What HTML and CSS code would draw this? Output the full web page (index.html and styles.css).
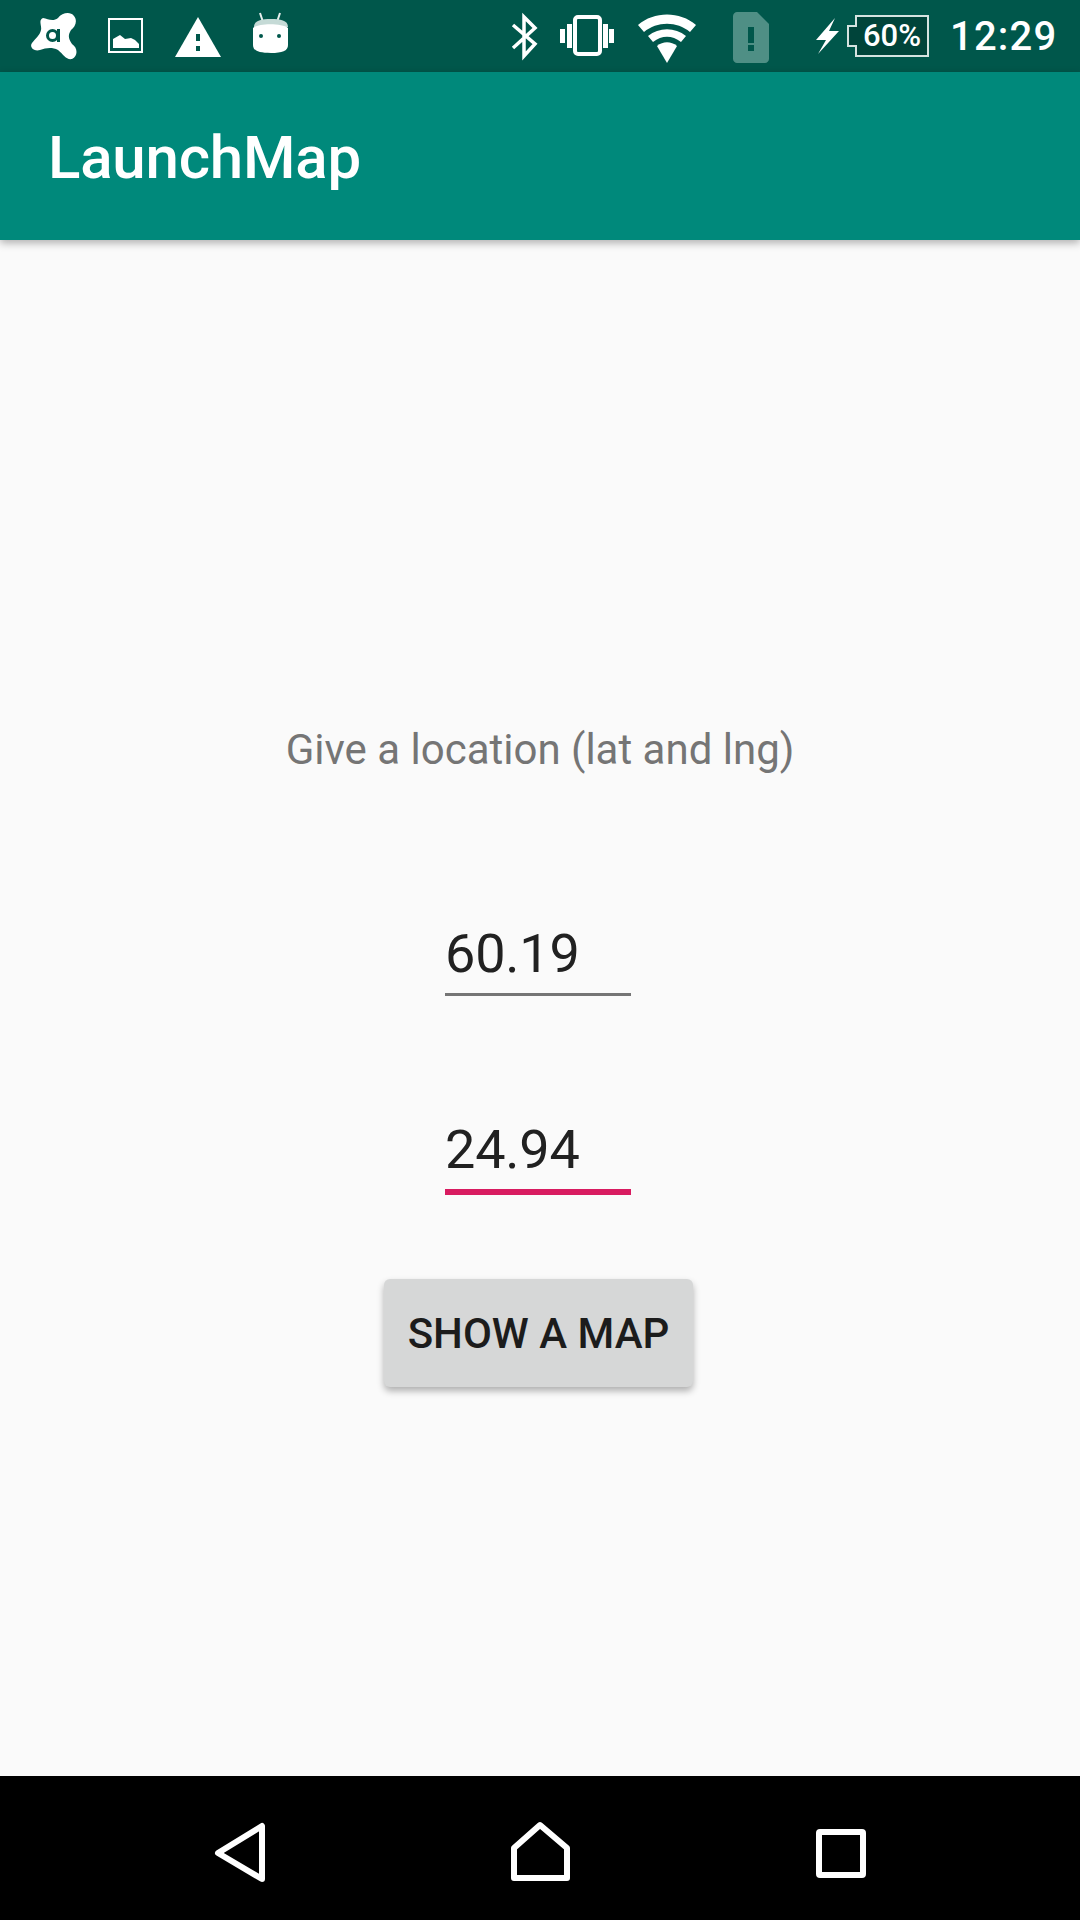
FILE: index.html
```html
<!DOCTYPE html>
<html>
<head>
  <title>LaunchMap</title>
  <link rel="stylesheet" href="styles.css">
</head>
<body>
  <div class="status-bar">
    <svg class="icon avast" viewBox="30 0 48 72">
      <path fill="#fff" d="M43 18C48 19 53 22 58 18C62 13 70 11 74 16C78 21 75 27 71 30C68 35 68 38 72 44C78 48 78 56 72 59C66 60 64 55 58 50C52 47 46 48 40 50C34 52 29 47 32 43C36 38 40 35 41 30C42 26 38 20 43 18Z"/>
      <circle cx="52.5" cy="35.5" r="5" fill="#fff" stroke="#00574b" stroke-width="3"/>
      <rect x="57" y="29" width="3" height="13" fill="#00574b"/>
    </svg>
    <svg class="icon picture" viewBox="108 0 36 72">
      <rect x="109" y="19" width="33" height="33" fill="none" stroke="#fff" stroke-width="2"/>
      <path fill="#fff" d="M113 48V39L120 35L125 39L131 38L135 40L139 44V48Z"/>
    </svg>
    <svg class="icon warning" viewBox="175 0 46 72">
      <path fill="#fff" d="M198 17L221 57H175Z"/>
      <rect x="196" y="34" width="4" height="7" fill="#00574b"/>
      <rect x="196" y="46" width="4" height="5" fill="#00574b"/>
    </svg>
    <svg class="icon droid" viewBox="253 0 36 72">
      <path stroke="#e6efed" stroke-width="2" d="M260 13L263 22M280 13L277 22"/>
      <path fill="#c5dad6" d="M254 27C254 20 262 19 271 19C280 19 288 20 288 27Z"/>
      <path fill="#fff" d="M253 28C258 23 282 23 288 28V45C288 51 282 53 271 53C259 53 253 51 253 45Z"/>
      <circle cx="261" cy="36" r="2" fill="#00574b"/>
      <circle cx="279" cy="36" r="2" fill="#00574b"/>
    </svg>
    <svg class="icon bluetooth" viewBox="511 0 27 72">
      <path fill="none" stroke="#fff" stroke-width="3.5" d="M513 25L535 44L524 56V17L535 28L513 48"/>
    </svg>
    <svg class="icon vibrate" viewBox="560 0 54 72">
      <rect x="575" y="17" width="25" height="37" rx="3" fill="none" stroke="#fff" stroke-width="4"/>
      <path fill="#fff" d="M560 29H565V43H560ZM567 24H572V48H567ZM603 24H608V48H603ZM609 29H614V43H609Z"/>
    </svg>
    <svg class="icon wifi" viewBox="638 0 58 72">
      <path fill="#fff" d="M638 25C654 11 680 11 696 25L690 32C677 21 657 21 644 32Z"/>
      <path fill="#fff" d="M648 36C659 27 675 27 686 36L681 42C672 35 662 35 653 42Z"/>
      <path fill="#fff" d="M657 46C663 41 671 41 677 46L667 63Z"/>
    </svg>
    <svg class="icon sim" viewBox="733 0 36 72">
      <path fill="#4f8f85" d="M737 12H757L769 24V59C769 61 767 63 765 63H737C735 63 733 61 733 59V16C733 14 735 12 737 12Z"/>
      <rect x="748" y="27" width="6" height="16" fill="#00574b"/>
      <rect x="748" y="45" width="6" height="6" fill="#00574b"/>
    </svg>
    <svg class="icon bolt" viewBox="816 0 24 72">
      <path fill="#fff" d="M835 18L816 40H826L818 54L839 31H829Z"/>
    </svg>
    <div class="battery">
      <span class="battery-nub"></span>
      <span class="battery-body">60%</span>
    </div>
    <span class="clock">12:29</span>
  </div>

  <div class="app-bar">LaunchMap</div>

  <div class="content">
    <p class="hint">Give a location (lat and lng)</p>
    <input class="field" type="text" value="60.19">
    <input class="field field-focus" type="text" value="24.94">
    <button class="map-btn">SHOW A MAP</button>
  </div>

  <div class="nav-bar">
    <svg class="nav-icon back" viewBox="212 1820 56 66">
      <path fill="none" stroke="#fff" stroke-width="6" stroke-linejoin="round" d="M218 1853L262 1826V1879Z"/>
    </svg>
    <svg class="nav-icon home" viewBox="508 1818 66 66">
      <path fill="none" stroke="#fff" stroke-width="6" stroke-linejoin="round" d="M540 1825L567 1848V1878H514V1848Z"/>
    </svg>
    <svg class="nav-icon recent" viewBox="812 1825 58 56">
      <rect x="819" y="1832" width="44" height="43" rx="1" fill="none" stroke="#fff" stroke-width="6" stroke-linejoin="round"/>
    </svg>
  </div>
</body>
</html>
```

FILE: styles.css
```css
* {
  box-sizing: border-box;
}

body {
  margin: 0;
  width: 1080px;
  height: 1920px;
  display: flex;
  flex-direction: column;
  background-color: #fafafa;
  font-family: Roboto, sans-serif;
  overflow: hidden;
}

.status-bar {
  flex: 0 0 72px;
  display: flex;
  align-items: center;
  padding-left: 30px;
  background-color: #00574b;
  color: #fff;
}

.icon {
  display: block;
  height: 72px;
}

.avast { width: 48px; }
.picture { width: 36px; margin-left: 30px; }
.warning { width: 46px; margin-left: 31px; }
.droid { width: 36px; margin-left: 32px; }
.bluetooth { width: 27px; margin-left: 222px; }
.vibrate { width: 54px; margin-left: 22px; }
.wifi { width: 58px; margin-left: 24px; }
.sim { width: 36px; margin-left: 37px; }
.bolt { width: 24px; margin-left: 47px; }

.battery {
  display: flex;
  align-items: center;
  margin-left: 7px;
}

.battery-nub {
  width: 10px;
  height: 22px;
  margin-right: -2px;
  border: 2px solid #d5e3e0;
  border-right: none;
  background-color: #00443a;
  position: relative;
  z-index: 1;
}

.battery-body {
  width: 74px;
  height: 42px;
  border: 2px solid #d5e3e0;
  background-color: #00443a;
  font-size: 31px;
  font-weight: 500;
  line-height: 38px;
  text-align: center;
}

.clock {
  margin-left: 21px;
  font-size: 40px;
  font-weight: 500;
  letter-spacing: 1.2px;
}

.app-bar {
  flex: 0 0 168px;
  height: 168px;
  padding-left: 48px;
  padding-top: 4px;
  background-color: #00897b;
  color: #fff;
  font-size: 60px;
  font-weight: 500;
  letter-spacing: -0.2px;
  line-height: 164px;
  box-shadow: 0 3px 8px rgba(0, 0, 0, 0.3);
  position: relative;
}

.content {
  flex: 1;
  display: flex;
  flex-direction: column;
  align-items: center;
  padding-top: 483px;
}

.hint {
  margin: 0 0 144px;
  color: #757575;
  font-size: 42px;
  line-height: 54px;
}

.field {
  display: block;
  width: 186px;
  height: 75px;
  margin-bottom: 121px;
  margin-left: -4px;
  padding: 0 0 8px;
  border: none;
  border-bottom: 3px solid #757575;
  outline: none;
  background: none;
  color: #212121;
  font-family: Roboto, sans-serif;
  font-size: 54px;
  letter-spacing: -0.2px;
}

.field-focus {
  height: 78px;
  margin-bottom: 84px;
  border-bottom: 6px solid #d81b60;
}

.map-btn {
  width: 309px;
  height: 108px;
  margin-left: -3px;
  padding: 0;
  border: none;
  border-radius: 6px;
  background-color: #d6d7d7;
  color: #1c1c1c;
  font-family: Roboto, sans-serif;
  font-size: 42px;
  font-weight: 500;
  box-shadow: 0 4px 7px rgba(0, 0, 0, 0.3);
}

.nav-bar {
  flex: 0 0 144px;
  display: flex;
  align-items: flex-start;
  background-color: #000;
}

.nav-icon {
  display: block;
}

.back {
  width: 56px;
  height: 66px;
  margin: 44px 0 0 212px;
}

.home {
  width: 66px;
  height: 66px;
  margin: 42px 0 0 240px;
}

.recent {
  width: 58px;
  height: 56px;
  margin: 49px 0 0 238px;
}
```
